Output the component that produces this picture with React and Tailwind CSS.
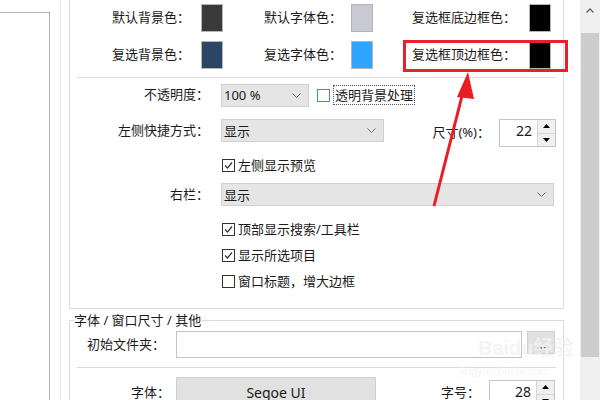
import React from "react";

const Chevron = () => (
  <svg width="9" height="5" viewBox="0 0 9 5" className="shrink-0">
    <path d="M0.5 0.5 L4.5 4.5 L8.5 0.5" fill="none" stroke="#6b6b6b" strokeWidth="1" />
  </svg>
);

const Select = ({ w, text }) => (
  <div className={`flex items-center justify-between h-[23px] ${w} bg-[#e5e5e5] border border-[#cfcfcf] pl-[2px] pr-[7px]`}>
    <span className="leading-[20px]">{text}</span>
    <Chevron />
  </div>
);

const Check = ({ checked, blue }) => (
  <div className={`w-[13px] h-[13px] shrink-0 bg-white border ${blue ? "border-[#3c8ce7]" : "border-[#333333]"} flex items-center justify-center`}>
    {checked && (
      <svg width="11" height="11" viewBox="0 0 11 11">
        <path d="M2 5.5 L4.5 8 L9 2.5" fill="none" stroke="#333" strokeWidth="1.2" />
      </svg>
    )}
  </div>
);

const ColorBox = ({ color, ml }) => (
  <div className={`w-[22px] h-[28px] shrink-0 border border-[#b5b5b5] ${ml}`}>
    <div className={`w-full h-full ${color}`} />
  </div>
);

const Spin = ({ value, w, h }) => (
  <div className={`flex ${w} ${h} border border-[#c4c4c4] bg-white`}>
    <div className="flex-1 text-right pr-[5px] leading-[22px] text-[14px]">{value}</div>
    <div className="w-[18px] flex flex-col border-l border-[#d6d6d6]">
      <div className="flex-1 bg-[#f0f0f0] flex items-center justify-center border-b border-[#d6d6d6]">
        <svg width="7" height="4" viewBox="0 0 7 4"><path d="M0 4 L3.5 0 L7 4 Z" fill="#000" /></svg>
      </div>
      <div className="flex-1 bg-[#f0f0f0] flex items-center justify-center">
        <svg width="7" height="4" viewBox="0 0 7 4"><path d="M0 0 L3.5 4 L7 0 Z" fill="#000" /></svg>
      </div>
    </div>
  </div>
);

const CheckRow = ({ checked, text, mt }) => (
  <div className={`flex items-center h-[20px] ${mt} pl-[152px] gap-[3px]`}>
    <Check checked={checked} />
    <span className="leading-[20px]">{text}</span>
  </div>
);

export default function App() {
  return (
    <div className="relative w-[600px] h-[400px] overflow-hidden bg-white flex text-[13px] text-[#1a1a1a] font-['Noto_Sans','Noto_Sans_CJK_SC',sans-serif]">
      {/* left navigation panel */}
      <div className="w-[61px] h-full shrink-0 border-r border-[#e6e6e6] pt-[12px]">
        <div className="w-[50px] h-full border-t border-r border-[#b0b0b0] bg-white" />
      </div>

      {/* main content */}
      <div className="flex-1 h-full pl-[8px] pr-[16px]">
        {/* group 1 (top cut off) */}
        <div className="border-x border-b border-[#dcdcdc] pb-[17px]">
          <div className="flex items-center h-[36px]">
            <span className="w-[120px] text-right">默认背景色：</span>
            <ColorBox color="bg-[#3a3a3a]" ml="ml-[11px]" />
            <span className="w-[119px] text-right">默认字体色：</span>
            <ColorBox color="bg-[#c8c9d3]" ml="ml-[9px]" />
            <span className="w-[143px] text-right">复选框底边框色：</span>
            <ColorBox color="bg-black" ml="ml-[13px]" />
          </div>
          <div className="flex items-center h-[38px]">
            <span className="w-[120px] text-right">复选背景色：</span>
            <ColorBox color="bg-[#2b4565]" ml="ml-[11px]" />
            <span className="w-[119px] text-right">复选字体色：</span>
            <ColorBox color="bg-[#2ea6ff]" ml="ml-[9px]" />
            <span className="w-[143px] text-right">复选框顶边框色：</span>
            <ColorBox color="bg-black" ml="ml-[13px]" />
          </div>
          <div className="mt-[3px] mx-[7px] h-px bg-[#dcdcdc]" />

          <div className="flex items-center h-[22px] mt-[6px]">
            <span className="w-[139px] text-right">不透明度：</span>
            <div className="ml-[12px]">
              <Select w="w-[88px]" text="100 %" />
            </div>
            <div className="ml-[8px]">
              <Check blue />
            </div>
            <span className="ml-[3px] border border-dotted border-[#555] px-[1px] leading-[18px]">透明背景处理</span>
          </div>

          <div className="flex items-start h-[28px] mt-[13px]">
            <span className="w-[139px] text-right leading-[23px]">左侧快捷方式：</span>
            <div className="ml-[12px]">
              <Select w="w-[163px]" text="显示" />
            </div>
            <span className="w-[106px] text-right leading-[27px]">尺寸(%)：</span>
            <div className="ml-[9px]">
              <Spin value="22" w="w-[57px]" h="h-[28px]" />
            </div>
          </div>

          <CheckRow checked text="左侧显示预览" mt="mt-[8px]" />

          <div className="flex items-center h-[23px] mt-[8px]">
            <span className="w-[139px] text-right">右栏：</span>
            <div className="ml-[12px]">
              <Select w="w-[333px]" text="显示" />
            </div>
          </div>

          <CheckRow checked text="顶部显示搜索/工具栏" mt="mt-[13px]" />
          <CheckRow checked text="显示所选项目" mt="mt-[6px]" />
          <CheckRow text="窗口标题，增大边框" mt="mt-[6px]" />
        </div>

        {/* group 2 */}
        <fieldset className="mt-[4px] border border-[#dcdcdc] h-[120px]">
          <legend className="ml-[4px] leading-[14px]">字体 / 窗口尺寸 / 其他</legend>
          <div className="flex items-start mt-[4px]">
            <span className="w-[95px] text-right leading-[27px]">初始文件夹：</span>
            <div className="ml-[11px] w-[346px] h-[27px] border border-[#c4c4c4] bg-white" />
            <div className="ml-[5px] w-[28px] h-[23px] bg-[#e1e1e1] border border-[#cfcfcf] flex items-end justify-center leading-[14px] pb-[2px]">...</div>
          </div>
          <div className="mt-[9px] mx-[7px] h-px bg-[#dcdcdc]" />
          <div className="flex items-start mt-[9px]">
            <span className="w-[100px] text-right leading-[30px]">字体：</span>
            <div className="ml-[6px] w-[200px] h-[30px] bg-[#e1e1e1] border border-[#cfcfcf] flex items-center justify-center text-[14px]">Segoe UI</div>
            <span className="w-[104px] text-right leading-[30px]">字号：</span>
            <div className="ml-[9px] mt-[3px]">
              <Spin value="28" w="w-[66px]" h="h-[28px]" />
            </div>
          </div>
        </fieldset>
      </div>

      {/* scrollbar */}
      <div className="w-[20px] h-full shrink-0 bg-[#f0f0f0] flex flex-col items-center">
        <div className="h-[33px] w-full flex items-start justify-center pt-[8px]">
          <svg width="8" height="5" viewBox="0 0 8 5"><path d="M0.5 4.5 L4 1 L7.5 4.5" fill="none" stroke="#606060" strokeWidth="1.3" /></svg>
        </div>
        <div className="w-[18px] h-[324px] bg-[#cdcdcd]" />
      </div>

      {/* watermark */}
      <div className="absolute left-[478px] top-[338px] pointer-events-none leading-none select-none whitespace-nowrap text-[#f2f2f2]/80">
        <div className="text-[20px] font-bold font-['Liberation_Sans','Noto_Sans_CJK_SC',sans-serif]">Baidu经验</div>
        <div className="mt-[8px] -ml-[18px] text-[11px] font-['Liberation_Sans',sans-serif]">jingyan.baidu.com</div>
      </div>

      {/* red annotation */}
      <div className="absolute left-[403px] top-[40px] w-[165px] h-[32px] border-[3px] border-[#e8202a] pointer-events-none" />
      <svg className="absolute left-0 top-0 pointer-events-none" width="600" height="400" viewBox="0 0 600 400">
        <line x1="434" y1="206" x2="463" y2="92" stroke="#ec1c24" strokeWidth="3" />
        <polygon points="468,72 457,97 474,99" fill="#ec1c24" />
      </svg>
    </div>
  );
}
